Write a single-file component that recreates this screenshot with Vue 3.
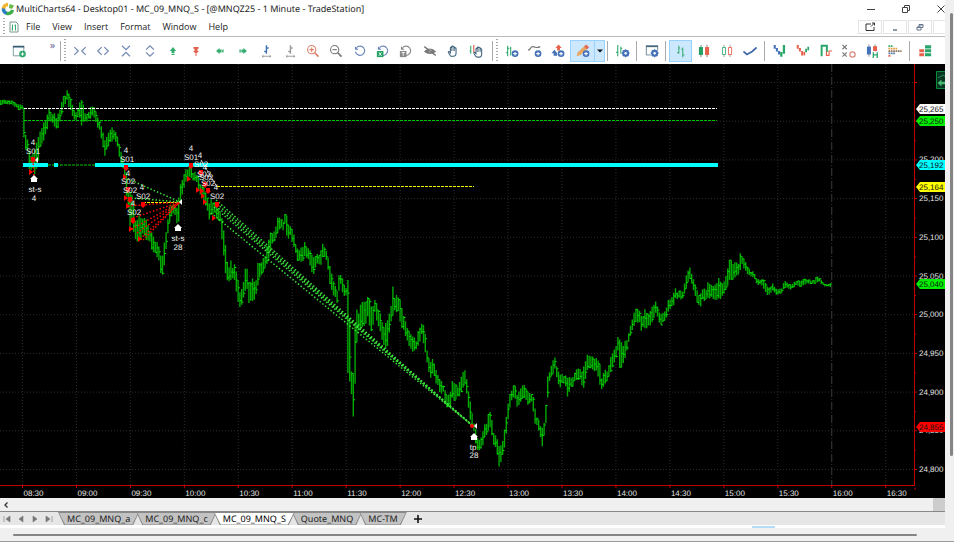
<script setup>
import { ref } from 'vue'

const menus = ['File', 'View', 'Insert', 'Format', 'Window', 'Help']
const tabs = ['MC_09_MNQ_a', 'MC_09_MNQ_c', 'MC_09_MNQ_S', 'Quote_MNQ', 'MC-TM']
const activeTab = ref('MC_09_MNQ_S')

const plus = '<circle cx="11.5" cy="11" r="3.8" fill="#4471b8"/><path d="M9.5 11h4M11.5 9v4" stroke="#fff" stroke-width="1.2"/>'
const gear = '<circle cx="11" cy="10.5" r="3" fill="none" stroke="#4471b8" stroke-width="2"/><path d="M11 6v9M6.500 10.500h9M7.800 7.300l6.400 6.400M14.200 7.300l-6.400 6.400" stroke="#4471b8" stroke-width="1.3"/><circle cx="11" cy="10.500" r="1.400" fill="#fff"/>'
const hand = '<path d="M5 13.500L2.700 9.800c-.5-1 .6-1.700 1.300-.9L5 10V4.600c0-1 1.500-1 1.500 0V3.200c0-1 1.700-1 1.700 0v.7c0-1 1.700-1 1.700 0v1.200c0-.9 1.600-.9 1.600 0v5.200c0 2-1 3.700-3 3.700H7C6 14 5.500 14 5 13.500z" fill="#fff" stroke="#3d617b" stroke-width="1.200"/><path d="M6.500 4.500V8M8.200 4V8M9.900 4.500V8" stroke="#3d617b" stroke-width=".9"/>'
const handRight = `<g transform="translate(3 1)">${hand}</g>`
const bar = (c) => `<path d="M8.500 1.500v9.500M6 8.500h2.500M8.500 4.500H11" stroke="${c}" stroke-width="1.600" fill="none"/><path d="M3.500 14h10M5 12.700L3.500 14 5 15.300M12 12.700l1.500 1.300-1.500 1.300" stroke="#888" stroke-width=".9" fill="none"/>`
const lens = (c, inner) => `<circle cx="6.500" cy="6.500" r="4.700" fill="none" stroke="${c}" stroke-width="1.200"/><path d="M10 10l4.300 4.300" stroke="${c}" stroke-width="2"/><path d="${inner}" stroke="${c}" stroke-width="1.300"/>`
const turn = (c) => `<path d="M4 4.200a5.300 5.300 0 1 1-1.200 4.500" fill="none" stroke="${c}" stroke-width="1.300"/><path d="M2.200 2.500v4.200h4.200z" fill="${c}"/>`
const badge = (c, t) => `<rect x="1" y="8" width="7.500" height="7" fill="${c}"/><path d="${t}" stroke="#fff" stroke-width="1" fill="none"/>`

const navIcons = [
  { name: 'Decrease bar spacing', art: '<path d="M1.500 3.500L6 8l-4.500 4.500M14.500 3.500L10 8l4.500 4.500" fill="none" stroke="#7388b2" stroke-width="1.400"/>' },
  { name: 'Increase bar spacing', art: '<path d="M6.500 3.500L2 8l4.500 4.500M9.500 3.500L14 8l-4.500 4.500" fill="none" stroke="#7388b2" stroke-width="1.400"/>' },
  { name: 'Compress scale', art: '<path d="M3.500 2L8 6.500 12.500 2M3.500 14L8 9.500l4.500 4.500" fill="none" stroke="#7388b2" stroke-width="1.400"/>' },
  { name: 'Expand scale', art: '<path d="M3.500 6.500L8 2l4.500 4.500M3.500 9.500L8 14l4.500-4.500" fill="none" stroke="#7388b2" stroke-width="1.400"/>' },
  { name: 'Shift up', art: '<path d="M8 3.500l3.600 4.500H9.700v2.300H6.300V8H4.400zM6.300 11h3.400v1.500H6.300z" fill="#36ad70"/>' },
  { name: 'Shift down', art: '<path d="M5 3.500h6v2H5zM8 11.500L4.700 8h1.600V5.500h3.400V8h1.600zM6.800 12h2.400v1.200H6.800z" fill="#e0614d"/>' },
  { name: 'Shift left', art: '<path d="M3.500 8l4-3.500v1.800h2.300v3.400H7.500v1.800zM10.500 6.300h1.600v3.400h-1.600z" fill="#36ad70"/>' },
  { name: 'Shift right', art: '<path d="M12.500 8l-4-3.500v1.800H6.200v3.400h2.300v1.800zM3.900 6.300h1.600v3.400H3.900z" fill="#36ad70"/>' },
  { name: 'Wider bars', art: bar('#3c6fae') },
  { name: 'Narrower bars', art: bar('#999') },
  { name: 'Zoom in', art: lens('#dc8169', 'M4 6.500h5M6.500 4v5') },
  { name: 'Zoom out', art: lens('#777', 'M4 6.500h5') },
  { name: 'Reset zoom', art: turn('#6b86bb') },
  { name: 'Reset scale', art: turn('#6b86bb') + badge('#22a163', 'M3.300 9.500l3 4M6.300 9.500l-3 4') },
  { name: 'Reset time', art: turn('#888') + badge('#888', 'M2.800 9.800h4M4.800 9.500V13.500') },
  { name: 'Hide drawings', art: '<path d="M1 8.500q7-7 14 0-7 6-14 0z" fill="#777"/><circle cx="8" cy="8" r="1.600" fill="#ddd"/><path d="M1.500 3l13 10" stroke="#777" stroke-width="1.500"/>' },
  { name: 'Hand', art: hand },
  { name: 'Hand with data', art: '<path d="M2 2v9M.5 8H2" stroke="#36ad70" stroke-width="1.300"/><path d="M5.500 1v9" stroke="#e0614d" stroke-width="1.300"/>' + handRight }
]

const insertIcons = [
  { name: 'Insert instrument', art: '<path d="M3 2v12M1 10h2M3 5h2M6.500 3v10" stroke="#36ad70" stroke-width="1.300"/>' + plus },
  { name: 'Insert study', art: '<path d="M0 7c3.500 0 2-4 5.500-4s3.500 2.500 8.500 0" fill="none" stroke="#777" stroke-width="1.300"/>' + plus },
  { name: 'Insert signal', art: '<path d="M3 13.500V10.500H.5L4 6.500l3 4v3z" fill="#4471b8"/><path d="M7 7.500V4.500H5L8.700.5l3.600 4h-2v3z" fill="#e8644d"/>' + plus }
]
const pencil = '<path d="M.5 14l1.500-4.500L10 2l3 3-7.500 7.500z" fill="#e6a963"/><path d="M9.200 2.800L11.500.5l3.500 3.300-2.500 2.400z" fill="#e46b58"/>' + plus
const formatIcon = '<path d="M2 1v13M0 9.500h2M5.500 3v8M5.500 5H7" stroke="#36ad70" stroke-width="1.300"/>' + gear
const windowIcon = '<path d="M1.500 3h13V7M1.500 3v9.500h5" fill="none" stroke="#607d94" stroke-width="1"/><path d="M1 2.500h14" stroke="#47677e" stroke-width="2"/>' + gear

const styleIcons = [
  { name: 'OHLC bars', on: true, art: '<path d="M5.500 2v9M3.500 10h2M5.500 4.500H7M10 4v11M8.500 6H10M10 12.500h2" stroke="#36ad70" stroke-width="1.200"/>' },
  { name: 'Candlesticks', art: '<path d="M4.500 1v14M11.500 1v14" stroke="#777" stroke-width="1"/><path d="M2.200 3.500h4.600v9H2.200z" fill="#22a163"/><path d="M9.200 3.500h4.600v9H9.200z" fill="#e8604b"/>' },
  { name: 'Hollow candles', art: '<path d="M4.500 1v14M11.500 1v14" stroke="#888" stroke-width=".8"/><path d="M2.800 4h3.500v8H2.800z" fill="#fff" stroke="#36ad70"/><path d="M9.800 4h3.500v8H9.800z" fill="#fff" stroke="#e8604b"/>' },
  { name: 'Line', art: '<path d="M.5 8.500l4 3.500 6-3.500 5-4.500" fill="none" stroke="#4169ac" stroke-width="2"/>' }
]
const altIcons = [
  { name: 'Renko', art: '<path d="M2 1v4.500M4.500 4.500v4M7 8v4" stroke="#4471b8" stroke-width="2.400"/><path d="M9.500 9v5.500M12.500 1v10" stroke="#28a568" stroke-width="2.600"/>' },
  { name: 'Kagi', art: '<path d="M2 1v4.500M4.500 4.500v4M7 8v5" stroke="#e8604b" stroke-width="2.300"/><path d="M9.500 9v4" stroke="#e8604b" stroke-width="2"/><path d="M11.500 5.500v4M14 3v4" stroke="#28a568" stroke-width="2"/>' },
  { name: 'Line break', art: '<path d="M3 14V2h6v7" fill="none" stroke="#28a568" stroke-width="2.200"/><path d="M8.500 8.500V13h3V8H15" fill="none" stroke="#e8604b" stroke-width="1.300"/>' },
  { name: 'Point and figure', art: '<path d="M.5 1l5 5M5.500 1l-5 5M.5 9.500l5 5M5.500 9.500l-5 5" stroke="#777" stroke-width="1.300"/><circle cx="12" cy="12" r="3" fill="none" stroke="#d98b80" stroke-width="1.400"/>' },
  { name: 'Heikin-Ashi', art: '<path d="M4.500 .5v14M11.500 .5v8" stroke="#777" stroke-width=".9"/><path d="M2.200 3h4.600v9H2.200z" fill="#4471b8"/><path d="M9.200 2.500h4.600V8H9.200z" fill="#e8604b"/><path d="M9.500 9.500V16M14 9.500V16M9.500 12.500H14" stroke="#28a568" stroke-width="1.500"/>' },
  { name: 'Volume profile', art: '<g stroke-width="2" stroke-dasharray="2 .7"><path d="M.5 2.500h5.500" stroke="#36ad70"/><path d="M.5 5.200h10" stroke="#e6a043"/><path d="M.5 8h15" stroke="#8d765d"/><path d="M.5 10.800h8" stroke="#5878b0"/><path d="M.5 13.500h3" stroke="#e8604b"/></g>' }
]
const dom = '<path d="M8 1.500h7v3.500H8zM8 6h7v3.500H8zM8 10.500h7V14H8z" fill="#28a568"/><path d="M1.500 6H7v3.500H1.500zM1.500 10.500H7V14H1.500z" fill="#e8604b"/>'
const newWindow = '<path d="M1.500 3v10.500h8M1.500 3h12v6" fill="none" stroke="#6f8f96" stroke-width="1"/><path d="M1 3h13" stroke="#355f73" stroke-width="2"/><circle cx="12" cy="11.500" r="3.800" fill="#28a568"/><path d="M10 11.500h4M12 9.500v4" stroke="#fff" stroke-width="1.200"/>'

/* Session range by chart position: x, high, low */
const range = [
  0,100,105, 5,99,104, 12,101,105, 18,104,110, 23,104,109, 24,105,148, 26,140,150, 28,139,152, 29,150,168, 31,155,180, 33,152,172, 35,147,178, 38,135,163,
  40,131,148, 43,124,141, 46,118,139, 49,108,122, 52,113,122, 55,113,128, 57,118,130, 59,108,127, 61,102,118, 63,97,108, 66,92,104, 67,89,104,
  69,93,112, 72,103,118, 74,110,120, 77,112,120, 79,97,115, 82,99,129, 85,112,122, 88,112,122, 91,106,118, 93,105,115, 95,108,120, 97,116,128,
  100,122,132, 103,132,148, 105,140,163, 107,136,152, 109,130,146, 112,125,142, 115,130,140, 118,137,150, 120,148,163, 123,158,168, 125,165,182,
  127,175,205, 129,190,225, 132,195,228, 134,208,236, 136,215,245, 138,212,240, 140,218,243, 143,214,235, 146,218,240, 149,228,245, 152,232,250,
  155,240,256, 158,243,258, 160,250,270, 161,258,275, 163,252,275, 165,235,260, 167,215,240, 169,208,225, 172,200,215, 174,205,215, 177,207,225,
  179,193,222, 180,185,205, 183,177,195, 185,170,185, 188,165,182, 190,165,175, 193,170,182, 196,172,180, 199,176,192, 202,182,198, 205,185,205,
  207,195,210, 209,205,220, 211,196,218, 214,200,214, 217,205,220, 220,210,222, 222,218,245, 225,240,270, 227,255,284, 229,266,283, 231,260,280,
  234,262,280, 236,270,290, 239,285,308, 240,293,312, 243,285,300, 245,268,290, 247,268,295, 249,280,306, 251,278,300, 253,275,303, 256,278,296,
  258,262,285, 260,262,276, 262,260,275, 265,255,268, 268,240,262, 270,232,252, 272,233,245, 275,230,240, 278,215,233, 281,216,226, 283,222,232,
  285,212,226, 287,216,240, 290,225,238, 293,230,245, 295,240,258, 298,250,262, 300,248,262, 303,245,262, 305,240,255, 307,242,262, 309,248,260,
  311,252,272, 313,258,278, 315,255,268, 318,253,265, 321,250,265, 322,243,258, 324,245,258, 327,253,262, 330,265,285, 333,280,295, 335,285,300,
  337,292,304, 339,274,290, 341,274,284, 343,280,298, 345,286,296, 347,289,295, 348,270,383, 350,330,383, 351,372,385, 353,370,421, 354,340,419,
  356,310,355, 358,305,330, 360,303,330, 363,300,328, 366,302,328, 368,295,318, 370,300,330, 372,310,332, 375,295,312, 377,305,325, 380,312,330,
  382,322,340, 384,324,348, 387,322,350, 389,315,335, 391,305,322, 393,283,315, 395,298,315, 398,290,310, 400,298,325, 403,312,330, 406,323,338,
  409,330,346, 412,335,352, 415,338,352, 417,340,354, 419,322,345, 422,323,335, 424,322,350, 427,350,362, 429,358,375, 431,360,380, 433,358,375,
  435,365,382, 438,375,388, 441,380,395, 443,382,392, 445,390,405, 448,398,409, 450,384,408, 453,380,402, 455,382,400, 458,388,398, 460,380,396,
  463,372,388, 465,368,384, 467,380,398, 469,395,412, 471,405,425, 473,420,430, 476,430,446, 478,440,452, 480,438,452, 482,435,450, 484,425,440,
  487,418,436, 489,410,428, 491,412,430, 493,430,444, 496,436,448, 498,440,462, 499,446,467, 501,444,462, 503,440,455, 505,425,445, 507,408,428,
  509,395,412, 511,386,402, 513,384,398, 515,381,398, 517,395,408, 520,388,405, 523,385,398, 525,384,398, 528,392,405, 531,392,402, 533,395,412,
  535,408,424, 537,418,428, 539,420,432, 541,425,442, 543,428,449, 545,410,430, 547,385,415, 548,372,390, 550,368,378, 553,360,374, 555,357,370,
  557,368,385, 560,375,388, 563,373,382, 566,374,388, 568,378,400, 571,375,390, 574,374,386, 576,370,382, 578,367,380, 581,366,380, 583,368,393,
  585,360,382, 587,354,370, 590,355,370, 593,356,370, 595,356,372, 597,358,370, 600,364,388, 602,375,390, 605,370,385, 608,365,380, 610,356,374,
  613,350,366, 616,344,358, 618,335,350, 620,340,373, 622,340,370, 624,343,362, 627,336,352, 629,328,340, 631,324,334, 633,314,328, 636,306,325, 639,308,324,
  642,318,333, 645,309,328, 648,315,330, 651,308,325, 653,305,320, 656,300,313, 658,308,322, 660,315,327, 663,310,322, 666,308,320, 668,300,312,
  671,298,308, 674,291,305, 676,287,300, 679,290,298, 682,292,303, 684,283,295, 686,276,290, 688,270,282, 690,267,280, 693,278,290, 695,283,295,
  697,290,303, 700,295,308, 703,288,302, 706,285,300, 708,278,298, 711,285,300, 714,284,300, 717,282,300, 719,276,298, 722,284,300, 725,275,292,
  728,267,285, 730,257,282, 733,262,280, 735,261,280, 738,263,278, 740,253,272, 742,255,266, 745,260,270, 748,268,276, 751,270,277, 754,272,278,
  757,278,285, 760,280,285, 763,278,286, 765,282,294, 768,288,296, 771,286,293, 773,283,291, 776,288,295, 779,288,296, 782,288,292, 784,280,288,
  787,282,288, 790,285,290, 793,283,288, 796,280,286, 799,281,287, 802,279,286, 805,278,285, 808,279,284, 811,281,285, 814,280,284, 817,275,282,
  819,277,283, 822,281,285, 825,284,287, 828,284,287, 832,283,287
]

function buildBars() {
  let seed = 11
  const rnd = () => (seed = (seed * 16807) % 2147483647) / 2147483647
  let stems = ''
  let ticks = ''
  let k = 0
  let close = 102
  for (let n = 0; n < 463; n++) {
    const x = n * 1.8 + 0.5
    while (k + 5 < range.length && range[k + 3] < x) k += 3
    const f = Math.min(1, (x - range[k]) / (range[k + 3] - range[k]))
    const hi = range[k + 1] + (range[k + 4] - range[k + 1]) * f
    const lo = range[k + 2] + (range[k + 5] - range[k + 2]) * f
    const span = lo - hi
    const top = hi + rnd() * rnd() * span * 0.4
    const low = lo - rnd() * rnd() * span * 0.4
    const a = Math.min(top, close)
    const b = Math.max(low, close)
    stems += `M${x.toFixed(1)} ${Math.max(hi, a).toFixed(1)}V${Math.min(lo, b).toFixed(1)}`
    close = top + rnd() * (low - top)
    ticks += `M${x.toFixed(1)} ${close.toFixed(1)}h1.800`
  }
  return { stems, ticks }
}
const bars = buildBars()

const times = ['08:30', '09:00', '09:30', '10:00', '10:30', '11:00', '11:30', '12:00', '12:30', '13:00', '13:30', '14:00', '14:30', '15:00', '15:30', '16:00', '16:30']
  .map((label, i) => ({ label, x: 22.5 + i * 53.95 }))
const levels = ['', '', '25,200', '25,150', '25,100', '25,050', '25,000', '24,950', '24,900', '24,850', '24,800']
  .map((label, i) => ({ label, y: 82 + i * 38.7 }))
const tags = [
  { label: '25,265', y: 109, fill: '#fff' },
  { label: '25,250', y: 121, fill: '#00f000' },
  { label: '25,192', y: 165, fill: '#00ffff' },
  { label: '25,164', y: 187, fill: '#ffff00' },
  { label: '25,040', y: 284, fill: '#00f000' },
  { label: '24,855', y: 427, fill: '#ff0000' }
]
const notes = [
  [33, 142, '4'], [33, 151, 'S01'], [35, 189, 'st-s'], [34, 198, '4'],
  [126, 150, '4'], [127, 159, 'S01'], [128, 173, '4'], [128, 181, 'S02'], [130, 190, 'S02'],
  [142, 187, '4'], [143, 196, 'S02'], [133, 203, '4'], [134, 212, 'S02'], [178, 238, 'st-s'], [178, 247, '28'],
  [191, 148, '4'], [191, 157, 'S01'], [200, 155, '4'], [201, 164, 'S02'], [205, 167, '4'], [204, 174, 'S02'],
  [206, 177, 'S02'], [208, 183, 'S02'], [216, 187, '4'], [217, 196, 'S02'], [473, 447, 'tp'], [474, 455, '28']
]
const sells = [[33, 160], [126, 168], [128, 190], [130, 200], [133, 221], [143, 205], [191, 166], [201, 173], [205, 185], [208, 191], [217, 205]]
const fills = [[31, 172], [125, 177], [126, 198], [128, 206], [131, 229], [140, 239], [189, 179], [198, 190], [203, 196], [205, 202], [214, 218], [202, 191]]
const buys = [[34, 179], [178, 228], [474, 437]]
const exits = [[37, 160], [181, 202], [476, 426]]
const fan = [[128, 206], [133, 218], [132, 229], [137, 233], [140, 239], [143, 240]]
const trades = [[216, 200], [217, 204], [216, 206], [214, 207], [211, 213]]
</script>

<template>
  <div class="app">
    <div class="main">
      <header class="title">
        <svg class="logo" viewBox="0 0 14 14">
          <path d="M7 2.500A4.500 4.500 0 0 0 2.500 7" fill="none" stroke="#f2b632" stroke-width="3.500" />
          <path d="M2.500 6.500A4.500 4.500 0 0 0 6 11.400" fill="none" stroke="#2b7fc0" stroke-width="3.500" />
          <path d="M5.500 11.300a4.500 4.500 0 0 0 6-3.300" fill="none" stroke="#3fae49" stroke-width="3.500" />
          <path d="M8.500 2l4.500 1.500-2 3.500-3-1z" fill="#65b945" />
        </svg>
        <h1>MultiCharts64 - Desktop01 - MC_09_MNQ_S - [@MNQZ25 - 1 Minute - TradeStation]</h1>
        <div class="window-buttons">
          <button aria-label="Minimize"><svg viewBox="0 0 10 10"><path d="M1 5.500h8" /></svg></button>
          <button aria-label="Restore"><svg viewBox="0 0 10 10"><path d="M1.500 3.500h5v5h-5zM3.500 3.500v-2h5v5h-2" /></svg></button>
          <button aria-label="Close"><svg viewBox="0 0 10 10"><path d="M1.500 1.500l7 7M8.500 1.500l-7 7" /></svg></button>
        </div>
      </header>

      <nav class="menu">
        <i class="grip"></i>
        <svg class="doc" viewBox="0 0 10 12">
          <path d="M1 1h6l2 2v8H1z" fill="#fff" stroke="#78988a" />
          <path d="M3.500 3.500v6M6.500 3.500v6M2.500 8h1M5.500 4.500h1" stroke="#36ad70" />
        </svg>
        <button v-for="m in menus" :key="m">{{ m }}</button>
        <div class="doc-buttons">
          <button aria-label="Detach"><svg viewBox="0 0 12 10"><path d="M7 2H2v6.500h8V5M7 4.500L10.500 1M8 1h2.500v2.500" stroke="#333" /></svg></button>
          <button aria-label="Minimize chart"><svg viewBox="0 0 12 10"><path d="M4 8h4" stroke="#65778b" stroke-width="1.500" /></svg></button>
          <button aria-label="Restore chart"><svg viewBox="0 0 12 10"><path d="M3 5h4v3H3zM5 5V2.500h4V5.500H7M5 3h4M3 5.500h4" stroke="#65778b" /></svg></button>
          <button aria-label="Close chart"></button>
        </div>
      </nav>

      <div class="toolbar">
        <button class="tool new" aria-label="New window"><svg viewBox="0 0 16 16" v-html="newWindow"></svg></button>
        <button class="more" aria-label="More tools">»</button>
        <i class="sep"></i>
        <i class="grip"></i>
        <div class="group nav-group">
          <button v-for="i in navIcons" :key="i.name" class="tool" :aria-label="i.name"><svg viewBox="0 0 16 16" v-html="i.art"></svg></button>
        </div>
        <i class="sep"></i>
        <i class="grip"></i>
        <div class="group insert-group">
          <button v-for="i in insertIcons" :key="i.name" class="tool" :aria-label="i.name"><svg viewBox="0 0 16 16" v-html="i.art"></svg></button>
        </div>
        <div class="split">
          <button class="tool" aria-label="Draw"><svg viewBox="0 0 16 16" v-html="pencil"></svg></button>
          <button class="drop" aria-label="Drawing tools"><svg viewBox="0 0 6 4"><path d="M0 .5h6L3 3.500z" fill="#111" /></svg></button>
        </div>
        <i class="sep"></i>
        <button class="tool" aria-label="Format instrument"><svg viewBox="0 0 16 16" v-html="formatIcon"></svg></button>
        <i class="sep"></i>
        <button class="tool" aria-label="Format window"><svg viewBox="0 0 16 16" v-html="windowIcon"></svg></button>
        <i class="sep"></i>
        <div class="group style-group">
          <button v-for="i in styleIcons" :key="i.name" class="tool" :class="{ on: i.on }" :aria-label="i.name"><svg viewBox="0 0 16 16" v-html="i.art"></svg></button>
        </div>
        <i class="sep"></i>
        <div class="group alt-group">
          <button v-for="i in altIcons" :key="i.name" class="tool" :aria-label="i.name"><svg viewBox="0 0 16 16" v-html="i.art"></svg></button>
        </div>
        <i class="sep"></i>
        <button class="tool" aria-label="Depth of market"><svg viewBox="0 0 16 16" v-html="dom"></svg></button>
      </div>

      <svg class="chart" viewBox="0 64 945 434">
        <rect y="64" width="945" height="434" fill="#000" />
        <g class="grid">
          <path v-for="t in times" :key="t.label" :d="`M${t.x} 64V485`" :class="{ session: t.label === '16:00' }" />
          <path v-for="l in levels" :key="l.y" :d="`M0 ${l.y + .5}H914`" />
        </g>
        <path :d="bars.stems" class="stems" />
        <path :d="bars.ticks" class="ticks" />

        <path d="M24 108.500H717" class="level white" />
        <path d="M24 120.500H717" class="level green" />
        <path d="M48 165H96" class="level green" />
        <path d="M23 165H48M54 165H58M95 165H718" stroke="#00ffff" stroke-width="4" />
        <path d="M217 186.500H474M143 202.500H180" class="level yellow" />

        <path v-for="(p, i) in fan" :key="'f' + i" :d="`M${p[0]} ${p[1]}L180 202`" class="dots red" />
        <path d="M33 160L34 176" class="dots red" />
        <path d="M128 179L180 202M131 198L180 202" class="dots lime" />
        <path v-for="(p, i) in trades" :key="'t' + i" :d="`M${p[0]} ${p[1]}L473 426`" class="dots lime" />
        <path d="M201 160L217 187" stroke="#ddd" stroke-dasharray="2 1" />

        <path v-for="(p, i) in fills" :key="'r' + i" :d="`M${p[0] - 2} ${p[1] - 3}l4 3-4 3z`" fill="#f00" />
        <path v-for="(p, i) in sells" :key="'s' + i" :d="`M${p[0] - 2} ${p[1] - 3}h4v3h1l-3 3-3-3h1z`" fill="#f00" />
        <circle cx="472" cy="426" r="2" fill="#f00" />
        <path v-for="(p, i) in buys" :key="'b' + i" :d="`M${p[0]} ${p[1] - 4}l4 4h-1v3h-6v-3h-1z`" fill="#fff" />
        <path v-for="(p, i) in exits" :key="'e' + i" :d="`M${p[0] + 1} ${p[1] - 3}v6l-3-3z`" fill="#fff" />
        <text v-for="(n, i) in notes" :key="'n' + i" :x="n[0]" :y="n[1] + 3" class="note">{{ n[2] }}</text>

        <path d="M914.500 64V485.500M0 485.500H915" class="axis" />
        <path v-for="t in times" :key="'x' + t.label" :d="`M${t.x} 485v3`" class="axis" />
        <path v-for="l in levels" :key="'y' + l.y" :d="`M914 ${l.y + .5}h3M914 ${l.y + 20}h2`" class="axis" />
        <text v-for="t in times" :key="'l' + t.label" :x="t.x + 1" y="496">{{ t.label }}</text>
        <text v-for="l in levels" :key="'p' + l.y" x="919" :y="l.y + 3">{{ l.label }}</text>
        <g v-for="t in tags" :key="t.label">
          <path :d="`M916 ${t.y}l4-5h25v10h-25z`" :fill="t.fill" />
          <text x="919" :y="t.y + 3" class="tag">{{ t.label }}</text>
        </g>
        <path d="M946 71.500h-9.500v17H946" fill="#07341f" stroke="#0b8a3c" />
        <path d="M938 78l5-3 3 2" fill="none" stroke="#2a8a55" />
        <path d="M937.500 83l4-3.500v2.300h4v2.400h-4v2.300z" fill="#48b877" />
      </svg>

      <div class="hscroll"><svg viewBox="0 0 6 8"><path d="M4.500 1.500L2 4l2.500 2.500" /></svg><i></i></div>

      <footer class="tabs">
        <div class="pager">
          <button aria-label="First"><svg viewBox="0 0 8 8"><path d="M1 1v6M7 1v6L3 4z" /></svg></button>
          <button aria-label="Previous"><svg viewBox="0 0 8 8"><path d="M6 1v6L2 4z" /></svg></button>
          <button aria-label="Next"><svg viewBox="0 0 8 8"><path d="M2 1v6l4-3z" /></svg></button>
          <button aria-label="Last"><svg viewBox="0 0 8 8"><path d="M7 1v6M1 1v6l4-3z" /></svg></button>
        </div>
        <button v-for="t in tabs" :key="t" class="tab" :class="{ active: t === activeTab }" @click="activeTab = t"><span>{{ t }}</span></button>
        <button class="add" aria-label="Add workspace"><svg viewBox="0 0 8 8"><path d="M0 4h8M4 0v8" stroke="#111" stroke-width="1.600" /></svg></button>
      </footer>
      <div class="strip"><i></i></div>
    </div>
    <div class="vbar"><i></i></div>
    <div class="hbar"><i></i></div>
  </div>
</template>

<style>
body { background: #f0f0f0; overflow: hidden; }
</style>

<style scoped>
.app { display: grid; grid-template-columns: minmax(0, 1fr) 9px; background: #f0f0f0; font: 9px/12px "Open Sans", "Noto Sans", sans-serif; color: #222; }
.main { min-width: 0; background: #fff; overflow: hidden; }
button { border: 0; padding: 0; margin: 0; background: none; font: inherit; color: inherit; }
svg { display: block; }

.title { display: flex; align-items: center; height: 18px; padding-left: 1px; }
.logo { width: 14px; height: 14px; }
h1 { margin: 0 0 0 1px; font-family: "Noto Sans", "Open Sans", sans-serif; font-size: 9px; font-weight: 400; white-space: nowrap; text-rendering: geometricPrecision; }
.window-buttons { display: flex; gap: 25px; margin-left: auto; margin-right: -1px; }
.window-buttons svg { width: 10px; height: 10px; fill: none; stroke: #444; stroke-width: 1; }

.menu { display: flex; align-items: center; height: 18px; padding-left: 3px; border-bottom: 1px solid #bbb; }
.grip { flex: none; width: 2px; height: 18px; background: repeating-linear-gradient(#aaa 0 1px, transparent 1px 3px); }
.doc { width: 10px; height: 12px; margin: 0 7px 0 4px; }
.menu > button { margin-right: 12px; }
.doc-buttons { display: flex; gap: 1px; margin-left: auto; margin-right: -12px; }
.doc-buttons button { display: grid; place-items: center; width: 24px; height: 14px; border: 1px solid #e4e4e4; }
.doc-buttons svg { width: 12px; height: 10px; fill: none; }

.toolbar { display: flex; align-items: center; height: 27px; padding-left: 7px; }
.tool { display: grid; place-items: center; flex: none; width: 23px; height: 22px; }
.tool svg { width: 14px; height: 14px; }
.more { width: 11px; height: 24px; margin-left: 17px; color: #5c5c90; font-size: 11px; line-height: 8px; padding-bottom: 12px; }
.sep { flex: none; width: 1px; height: 20px; margin: 0 3px 0 2px; background: #aaa; }
.toolbar .grip { height: 24px; margin-right: 2px; }
.group { display: grid; grid-auto-flow: column; grid-auto-columns: 1fr; justify-items: center; flex: none; }
.nav-group { width: 420px; margin-right: 2px; }
.insert-group { width: 70px; }
.style-group { width: 93px; }
.alt-group { width: 139px; }
.split { display: flex; background: #cce8ff; border: 1px solid #99d1ff; }
.split .tool { height: 20px; }
.drop { display: grid; place-items: center; width: 10px; border-left: 1px solid #99d1ff; }
.drop svg { width: 6px; height: 4px; }
.on { background: #cce8ff; outline: 1px solid #99d1ff; outline-offset: -1px; }

.chart { width: 100%; height: auto; font: 8px "Liberation Sans", Arial, sans-serif; text-rendering: geometricPrecision; }
.chart text { fill: #e4e4e4; }
.chart .note { text-anchor: middle; fill: #f4f4f4; }
.chart .tag { fill: #111; }
.grid path { stroke: #2c2c2c; stroke-dasharray: 1 2; }
.grid .session { stroke: #3c3c3c; stroke-dasharray: 8 2 1 2; }
.stems { stroke: #00a800; stroke-width: 1.4; }
.ticks { stroke: #00dc00; stroke-width: 1; }
.level { stroke-width: 1; stroke-dasharray: 3 1; }
.white { stroke: #fff; }
.green { stroke: #00c800; }
.yellow { stroke: #f4f400; }
.dots { stroke-width: 1.5; stroke-dasharray: 1.5 2; }
.red { stroke: #f00; }
.lime { stroke: #3be03b; }
.axis { stroke: #c00000; fill: none; }

.hscroll { display: flex; justify-content: space-between; align-items: center; height: 13px; background: #f0f0f0; }
.hscroll svg { width: 6px; height: 8px; margin-left: 3px; fill: none; stroke: #333; stroke-width: 1.3; }
.hscroll i { width: 12px; height: 13px; background: #cdcdcd; }

.tabs { display: flex; height: 14px; background: #e6e6e6; border-top: 1px solid #888; box-sizing: border-box; }
.pager { display: flex; align-items: center; justify-content: space-between; width: 50px; margin: 0 5px 0 3px; }
.pager svg { width: 8px; height: 8px; fill: #777; }
.pager path { stroke: #777; stroke-width: 0.6; }
.tab { margin-right: -3px; padding: 0 1px; background: #888; clip-path: polygon(0 0, 100% 0, calc(100% - 6px) 100%, 6px 100%); }
.tab span { display: block; height: 12px; padding: 0 8px; background: #c3c3c3; font-family: "Noto Sans", "Open Sans", sans-serif; line-height: 11px; text-rendering: geometricPrecision; white-space: nowrap; clip-path: polygon(0 0, 100% 0, calc(100% - 6px) 100%, 6px 100%); }
.tab.active { position: relative; z-index: 1; }
.tab.active span { background: #fff; color: #000; }
.add { margin-left: 10px; }
.add svg { width: 8px; height: 8px; }

.strip { display: flex; justify-content: flex-end; height: 3px; padding-right: 18%; }
.strip i { width: 23px; height: 2px; margin-top: 1px; background: #b5dcf7; }

.vbar { display: flex; justify-content: center; padding: 13px 0 0 4px; }
.vbar i { width: 3px; height: 86%; border-radius: 2px; background: #858585; }
.hbar { grid-column: 1 / -1; height: 14px; padding: 6px 37px 0 13px; border-bottom: 1px solid #999; box-sizing: border-box; }
.hbar i { display: block; height: 2px; border-radius: 1px; background: #858585; }
</style>
